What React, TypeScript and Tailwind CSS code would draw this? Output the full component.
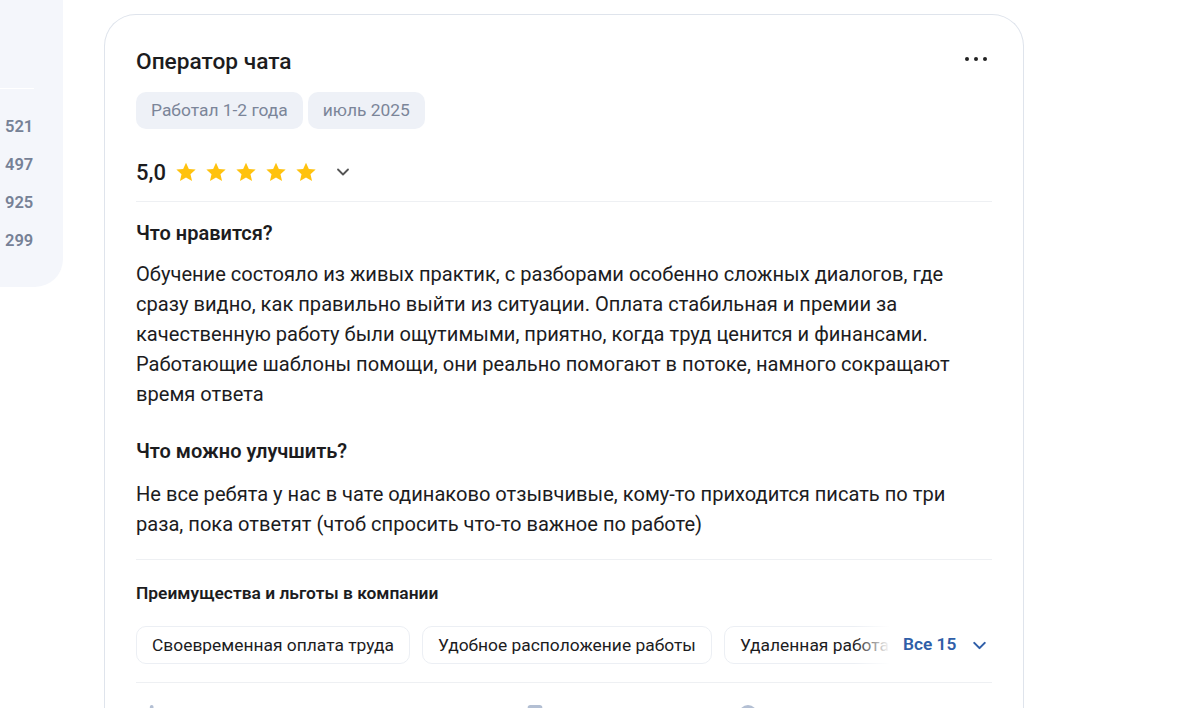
import { ChevronDown } from "lucide-react";

const Star = () => (
  <svg width="22" height="22" viewBox="0 0 24 24" className="shrink-0">
    <path
      fill="#ffc20e"
      d="M12 1.8l3.1 6.9 7.4.7-5.6 5 1.7 7.4L12 17.9l-6.6 3.9 1.7-7.4-5.6-5 7.4-.7z"
    />
  </svg>
);

const benefits = ["Своевременная оплата труда", "Удобное расположение работы", "Удаленная работа"];

const App = () => {
  return (
    <div
      className="flex h-[708px] w-[1184px] overflow-hidden bg-white text-[#1c1c1e]"
      style={{ fontFamily: "Roboto, 'Noto Sans', sans-serif" }}
    >
      {/* left stats panel (clipped) */}
      <aside className="h-[287px] w-[63px] shrink-0 rounded-br-[28px] bg-[#f4f6fb] pt-[88px]">
        <div className="h-px w-[34px] bg-white" />
        <div className="flex flex-col gap-[16px] pl-[5px] pt-[27px] text-[16.5px] font-semibold leading-[22px] text-[#768196]">
          <span>521</span>
          <span>497</span>
          <span>925</span>
          <span>299</span>
        </div>
      </aside>

      {/* review card */}
      <section className="ml-[41px] mt-[14px] w-[920px] shrink-0 rounded-t-[32px] border border-b-0 border-[#dfe4ec] px-[31px] pt-[33px]">
        <div className="flex items-center justify-between">
          <h2 className="text-[22.7px] font-medium leading-[28px]">Оператор чата</h2>
          <button className="flex gap-[5px] pr-[5px] pb-[6px]">
            <span className="h-[4px] w-[4px] rounded-full bg-[#222]" />
            <span className="h-[4px] w-[4px] rounded-full bg-[#222]" />
            <span className="h-[4px] w-[4px] rounded-full bg-[#222]" />
          </button>
        </div>

        <div className="mt-[16px] flex gap-[5px] text-[17.4px] text-[#7b8599]">
          <span className="rounded-[10px] bg-[#eef1f7] px-[15px] py-[8px] leading-[21px]">Работал 1-2 года</span>
          <span className="rounded-[10px] bg-[#eef1f7] px-[15px] py-[8px] leading-[21px]">июль 2025</span>
        </div>

        <div className="mt-[29px] flex h-[28px] items-center">
          <span className="mr-[9px] text-[22px] font-medium">5,0</span>
          <div className="flex gap-[8px]">
            <Star />
            <Star />
            <Star />
            <Star />
            <Star />
          </div>
          <ChevronDown className="ml-[16px] h-[20px] w-[20px] text-[#555]" strokeWidth={2.2} />
        </div>

        <div className="mt-[15px] h-px bg-[#eef0f3]" />

        <h3 className="mt-[19px] text-[20px] font-semibold leading-[24px]">Что нравится?</h3>
        <p className="mt-[14px] text-[20.1px] leading-[30px]">
          Обучение состояло из живых практик, с разборами особенно сложных диалогов, где сразу видно, как
          правильно выйти из ситуации. Оплата стабильная и премии за качественную работу были ощутимыми,
          приятно, когда труд ценится и финансами. Работающие шаблоны помощи, они реально помогают в потоке,
          намного сокращают время ответа
        </p>

        <h3 className="mt-[30px] text-[20px] font-semibold leading-[24px]">Что можно улучшить?</h3>
        <p className="mt-[16px] text-[20.1px] leading-[30px]">
          Не все ребята у нас в чате одинаково отзывчивые, кому-то приходится писать по три раза, пока
          ответят (чтоб спросить что-то важное по работе)
        </p>

        <div className="mt-[20px] h-px bg-[#eef0f3]" />

        <h4 className="mt-[23px] text-[17.4px] font-semibold leading-[20px]">Преимущества и льготы в компании</h4>

        <div className="mt-[23px] flex items-center">
          <div className="relative flex w-[754px] gap-[12px] overflow-hidden">
            {benefits.map((b) => (
              <span
                key={b}
                className="shrink-0 whitespace-nowrap rounded-[10px] border border-[#eceff4] px-[15px] py-[8px] text-[17.4px] leading-[20px]"
              >
                {b}
              </span>
            ))}
            <div className="pointer-events-none absolute right-0 top-0 h-full w-[36px] bg-gradient-to-r from-white/0 to-white" />
          </div>
          <button className="ml-[13px] flex items-center gap-[13px] text-[17.3px] font-semibold text-[#2f5ea8]">
            Все 15
            <ChevronDown className="h-[21px] w-[21px]" strokeWidth={2.4} />
          </button>
        </div>

        <div className="mt-[18px] h-px bg-[#eef0f3]" />

        <div className="mt-[22px] flex text-[#b3bfd3]">
          <svg width="22" height="22" viewBox="0 0 24 24" className="ml-[12px]" fill="currentColor">
            <rect x="2" y="0" width="4" height="20" rx="2" />
          </svg>
          <svg width="22" height="22" viewBox="0 0 24 24" className="ml-[354px]" fill="currentColor">
            <rect x="4" y="0" width="16" height="20" rx="3" />
          </svg>
          <svg width="22" height="22" viewBox="0 0 24 24" className="ml-[191px]" fill="currentColor">
            <circle cx="12" cy="10" r="10" />
          </svg>
        </div>
      </section>
    </div>
  );
};

export default App;
